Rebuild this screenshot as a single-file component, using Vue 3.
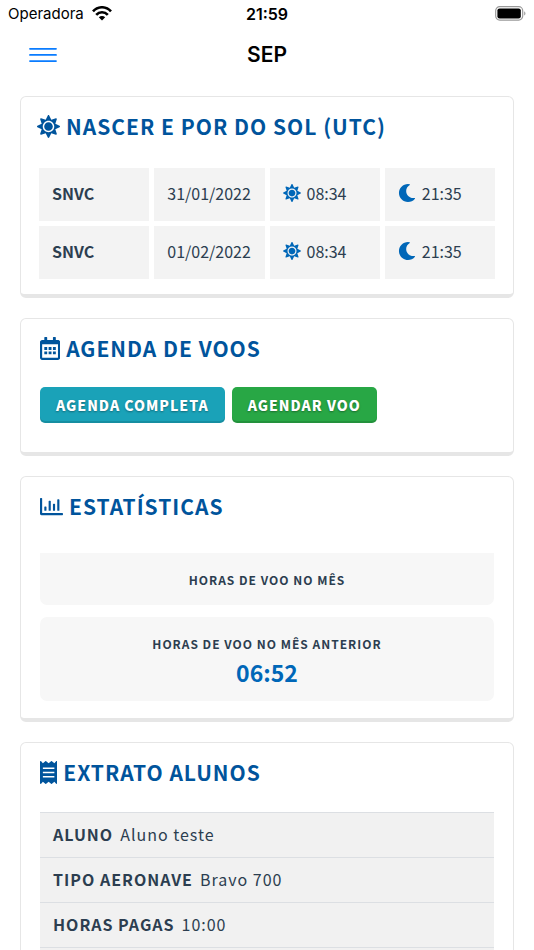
<script setup>
import { h } from 'vue'

const glyphs = {
  sun: {
    w: 512,
    d: 'M256 160c-52.9 0-96 43.1-96 96s43.1 96 96 96 96-43.1 96-96-43.1-96-96-96zm246.4 80.5l-94.7-47.3 33.5-100.4c4.5-13.6-8.4-26.5-21.9-21.9l-100.4 33.5-47.4-94.8c-6.4-12.8-24.6-12.8-31 0l-47.3 94.7L92.7 70.8c-13.6-4.5-26.5 8.4-21.9 21.9l33.5 100.4-94.7 47.4c-12.8 6.4-12.8 24.6 0 31l94.7 47.3-33.5 100.5c-4.5 13.6 8.4 26.5 21.9 21.9l100.4-33.5 47.3 94.7c6.4 12.8 24.6 12.8 31 0l47.3-94.7 100.4 33.5c13.6 4.5 26.5-8.4 21.9-21.9l-33.5-100.4 94.7-47.3c13-6.5 13-24.7.2-31.1zm-155.9 106c-49.9 49.9-131.1 49.9-181 0-49.9-49.9-49.9-131.1 0-181 49.9-49.9 131.1-49.9 181 0 49.9 49.9 49.9 131.1 0 181z'
  },
  moon: {
    w: 512,
    d: 'M283.211 512c78.962 0 151.079-35.925 198.857-94.792 7.068-8.708-.639-21.43-11.562-19.35-124.203 23.654-238.262-71.576-238.262-196.954 0-72.222 38.662-138.635 101.498-174.394 9.686-5.512 7.25-20.197-3.756-22.23A258.156 258.156 0 0 0 283.211 0c-141.309 0-256 114.511-256 256 0 141.309 114.511 256 256 256z'
  },
  calendar: {
    w: 448,
    d: 'M96 224h64v64H96zM192 224h64v64h-64zM288 224h64v64h-64zM96 320h64v64H96zM192 320h64v64h-64zM288 320h64v64h-64zM448 112v352c0 26.5-21.5 48-48 48H48c-26.5 0-48-21.5-48-48V112c0-26.5 21.5-48 48-48h48V12c0-6.6 5.4-12 12-12h40c6.6 0 12 5.4 12 12v52h128V12c0-6.6 5.4-12 12-12h40c6.6 0 12 5.4 12 12v52h48c26.5 0 48 21.5 48 48zm-48 346V160H48v298c0 3.3 2.7 6 6 6h340c3.3 0 6-2.7 6-6z'
  },
  chart: {
    w: 512,
    d: 'M396.8 352h22.4c6.4 0 12.8-6.4 12.8-12.8V108.8c0-6.4-6.4-12.8-12.8-12.8h-22.4c-6.4 0-12.8 6.4-12.8 12.8v230.4c0 6.4 6.4 12.8 12.8 12.8zm-192 0h22.4c6.4 0 12.8-6.4 12.8-12.8V140.8c0-6.4-6.4-12.8-12.8-12.8h-22.4c-6.4 0-12.8 6.4-12.8 12.8v198.4c0 6.4 6.4 12.8 12.8 12.8zm96 0h22.4c6.4 0 12.8-6.4 12.8-12.8V204.8c0-6.4-6.4-12.8-12.8-12.8h-22.4c-6.4 0-12.8 6.4-12.8 12.8v134.4c0 6.4 6.4 12.8 12.8 12.8zM496 400H48V80c0-8.84-7.16-16-16-16H16C7.16 64 0 71.16 0 80v336c0 17.67 14.33 32 32 32h464c8.84 0 16-7.16 16-16v-16c0-8.84-7.16-16-16-16zm-387.2-48h22.4c6.4 0 12.8-6.4 12.8-12.8v-70.4c0-6.4-6.4-12.8-12.8-12.8h-22.4c-6.4 0-12.8 6.4-12.8 12.8v70.4c0 6.4 6.4 12.8 12.8 12.8z'
  },
  receipt: {
    w: 384,
    d: 'M358.4 3.2L320 48 265.6 3.2a15.9 15.9 0 0 0-19.2 0L192 48 137.6 3.2a15.9 15.9 0 0 0-19.2 0L64 48 25.6 3.2C15-4.7 0 2.8 0 16v480c0 13.2 15 20.7 25.6 12.8L64 464l54.4 44.8a15.9 15.9 0 0 0 19.2 0L192 464l54.4 44.8a15.9 15.9 0 0 0 19.2 0L320 464l38.4 44.8c10.5 7.9 25.6.4 25.6-12.8V16c0-13.2-15-20.7-25.6-12.8zM64 144h256v32H64zM64 240h256v32H64zM64 336h256v32H64z'
  }
}

const Icon = (props) =>
  h(
    'svg',
    { viewBox: `0 0 ${glyphs[props.name].w} 512`, fill: 'currentColor', 'fill-rule': 'evenodd', 'aria-hidden': 'true' },
    [h('path', { d: glyphs[props.name].d })]
  )
Icon.props = ['name']

const sunTimes = [
  { place: 'SNVC', date: '31/01/2022', rise: '08:34', set: '21:35' },
  { place: 'SNVC', date: '01/02/2022', rise: '08:34', set: '21:35' }
]

const statement = [
  { label: 'ALUNO', value: 'Aluno teste' },
  { label: 'TIPO AERONAVE', value: 'Bravo 700' },
  { label: 'HORAS PAGAS', value: '10:00' },
  { label: '', value: '' }
]
</script>

<template>
  <div class="screen">
    <div class="status">
      <div class="carrier">
        <span>Operadora</span>
        <svg class="wifi" viewBox="0 0 20 15" aria-hidden="true">
          <g fill="none" stroke="#000" stroke-width="2.6">
            <path d="M1 5.4C6-.1 14-.1 19 5.4" />
            <path d="M4.2 8.8c3.2-3.5 8.4-3.5 11.6 0" />
          </g>
          <path d="M10 14.6l-3.2-3.3c1.8-1.7 4.6-1.7 6.4 0z" />
        </svg>
      </div>
      <span class="clock">21:59</span>
      <svg class="battery" viewBox="0 0 31 15" aria-hidden="true">
        <rect x=".7" y=".7" width="27" height="13.4" rx="4" fill="none" stroke="#999" stroke-width="1.2" />
        <rect x="2.4" y="2.4" width="23.4" height="10" rx="2.2" />
        <path d="M29.2 5.2c1.7.8 1.7 3.6 0 4.4z" fill="#999" />
      </svg>
    </div>

    <header class="nav">
      <button class="menu" type="button" aria-label="Menu">
        <svg viewBox="0 0 28 16" aria-hidden="true">
          <path d="M1 1.8h26M1 7.9h26M1 14.1h26" fill="none" stroke="#0a7cff" stroke-width="1.8" stroke-linecap="round" />
        </svg>
      </button>
      <h1>SEP</h1>
    </header>

    <main class="cards">
      <section class="card sun-card">
        <h2><Icon name="sun" class="icon" />NASCER E POR DO SOL (UTC)</h2>
        <table class="sun-table">
          <tbody>
            <tr v-for="row in sunTimes" :key="row.date">
              <th scope="row">{{ row.place }}</th>
              <td>{{ row.date }}</td>
              <td><span class="time"><Icon name="sun" class="small-icon" /><span>{{ row.rise }}</span></span></td>
              <td><span class="time"><Icon name="moon" class="small-icon" /><span>{{ row.set }}</span></span></td>
            </tr>
          </tbody>
        </table>
      </section>

      <section class="card agenda-card">
        <h2><Icon name="calendar" class="icon" />AGENDA DE VOOS</h2>
        <div class="actions">
          <button class="btn info" type="button">AGENDA COMPLETA</button>
          <button class="btn success" type="button">AGENDAR VOO</button>
        </div>
      </section>

      <section class="card stats-card">
        <h2><Icon name="chart" class="icon" />ESTATÍSTICAS</h2>
        <div class="stats">
          <div class="stat first">
            <h3>HORAS DE VOO NO MÊS</h3>
          </div>
          <div class="stat">
            <h3>HORAS DE VOO NO MÊS ANTERIOR</h3>
            <p>06:52</p>
          </div>
        </div>
      </section>

      <section class="card statement-card">
        <h2><Icon name="receipt" class="icon" />EXTRATO ALUNOS</h2>
        <table class="statement">
          <tbody>
            <tr v-for="(row, i) in statement" :key="i">
              <td><strong>{{ row.label }}</strong><span>{{ row.value }}</span></td>
            </tr>
          </tbody>
        </table>
      </section>
    </main>
  </div>
</template>

<style>
body {
  margin: 0;
  background: #fff;
}
</style>

<style scoped>
.screen {
  height: 100vh;
  overflow: hidden;
  background: #fff;
  color: #2c3e50;
  font-family: "Noto Sans CJK SC", "Noto Sans", sans-serif;
  font-size: 16px;
}
h1, h2, h3, p {
  margin: 0;
}
.status {
  display: grid;
  grid-template-columns: 1fr auto 1fr;
  align-items: center;
  height: 27px;
  padding: 0 8px;
  color: #000;
  font-family: Inter, sans-serif;
  font-size: 15px;
}
.carrier {
  display: flex;
  align-items: center;
  gap: 8px;
}
.wifi {
  width: 20px;
  height: 15px;
}
.clock {
  font-size: 16px;
  font-weight: 600;
}
.battery {
  justify-self: end;
  width: 31px;
  height: 15px;
}
.nav {
  display: grid;
  grid-template-columns: 1fr auto 1fr;
  align-items: center;
  height: 55px;
  padding: 0 29px;
}
.menu {
  width: 28px;
  height: 16px;
  padding: 0;
  border: 0;
  background: none;
}
.menu svg {
  display: block;
  width: 28px;
  height: 16px;
}
.nav h1 {
  color: #000;
  font-family: Inter, sans-serif;
  font-size: 21px;
  font-weight: 600;
  line-height: 26px;
}
.cards {
  display: flex;
  flex-direction: column;
  gap: 20px;
  padding: 14px 20px;
}
.card {
  border: 1px solid #e6e6e6;
  border-bottom-width: 4px;
  border-radius: 6px;
  padding: 13px 19px 17px;
}
.card h2 {
  display: flex;
  align-items: center;
  gap: 6px;
  color: #00549c;
  font-size: 21px;
  font-weight: 700;
  line-height: 32px;
  letter-spacing: 1px;
  white-space: nowrap;
}
.icon {
  flex: none;
  height: 23px;
}
.sun-card {
  padding: 13px 13px 10px;
}
.sun-card h2 {
  padding-left: 3px;
}
.sun-table {
  width: 100%;
  margin-top: 21px;
  border-spacing: 5px;
  table-layout: fixed;
}
.sun-table th,
.sun-table td {
  height: 50px;
  padding: 0 0 3px 13px;
  background: #f3f3f3;
  line-height: 24px;
  text-align: left;
  white-space: nowrap;
}
.time {
  display: flex;
  align-items: center;
  gap: 6px;
}
.small-icon {
  width: 18px;
  height: 18px;
  color: #0067b8;
}
.agenda-card {
  padding-bottom: 29px;
}
.actions {
  display: flex;
  gap: 7px;
  margin-top: 23px;
}
.btn {
  height: 36px;
  padding: 0 16px;
  border: 0;
  border-radius: 5px;
  box-shadow: inset 0 -2px 0 rgba(0, 0, 0, 0.12);
  color: #fff;
  font-family: inherit;
  font-size: 14px;
  font-weight: 900;
  line-height: 20px;
  letter-spacing: 1px;
  text-shadow: 0 1px 2px rgba(0, 0, 0, 0.35);
  white-space: nowrap;
}
.info {
  background-color: #1aa2b8;
}
.success {
  background-color: #28a745;
}
.stats {
  display: flex;
  flex-direction: column;
  gap: 12px;
  margin-top: 31px;
}
.stat {
  padding: 17px 16px 13px;
  border-radius: 7px;
  background: #f7f7f7;
  text-align: center;
}
.stat.first {
  padding-bottom: 15px;
  border-radius: 0 0 7px 7px;
}
.stat h3 {
  font-size: 12px;
  font-weight: 700;
  line-height: 20px;
  letter-spacing: 1px;
}
.stat p {
  margin-top: 2px;
  color: #0067b8;
  font-size: 23px;
  font-weight: 700;
  line-height: 32px;
}
.statement-card {
  padding-bottom: 20px;
}
.statement {
  width: 100%;
  margin-top: 24px;
  border-collapse: collapse;
}
.statement td {
  height: 41px;
  padding: 0 13px 3px;
  border-top: 1px solid #dcdfe3;
  background: #f1f1f1;
  line-height: 24px;
  letter-spacing: 1px;
  white-space: nowrap;
}
.statement strong {
  margin-right: 7px;
}
</style>
